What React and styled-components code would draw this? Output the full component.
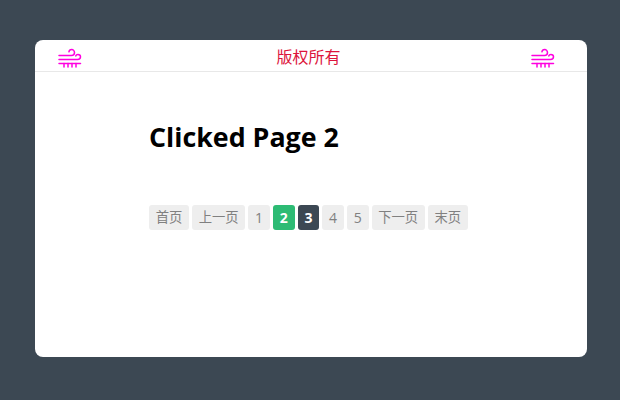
import { useState } from "react";
import styled, { createGlobalStyle } from "styled-components";

const GlobalStyle = createGlobalStyle`
  html, body {
    margin: 0;
    height: 100%;
    background: #3c4853;
    font-family: "Open Sans", "Noto Sans CJK SC", sans-serif;
  }
`;

const Page = styled.div`
  width: 620px;
  height: 400px;
  padding: 40px 33px 43px 35px;
  box-sizing: border-box;
`;

const Card = styled.main`
  height: 100%;
  background: #fff;
  border-radius: 8px;
  overflow: hidden;
`;

const Header = styled.header`
  height: 32px;
  box-sizing: border-box;
  padding: 4px 32px 0 23px;
  display: flex;
  align-items: center;
  justify-content: space-between;
  border-bottom: 1px solid #e8e8e8;
`;

const Title = styled.span`
  margin: -3px 0 0 4px;
  color: #dc143c;
  font-size: 16px;
  line-height: 27px;
  font-family: "Noto Sans CJK SC", sans-serif;
`;

const Content = styled.section`
  padding: 47px 0 0 114px;
`;

const Heading = styled.h1`
  margin: 0;
  color: #000;
  font-size: 26.8px;
  line-height: 36px;
  font-weight: 700;
`;

const Pager = styled.nav`
  margin-top: 50px;
  display: flex;
  gap: 3px;
`;

const PageButton = styled.button`
  height: 25px;
  min-width: ${(props) => (props.$wide ? "auto" : "21.67px")};
  padding: 0 6.67px;
  box-sizing: border-box;
  border: 0;
  border-radius: 3px;
  font-family: "Open Sans", "Noto Sans CJK SC", sans-serif;
  font-size: ${(props) => (props.$wide ? "13.33px" : "14px")};
  line-height: 25px;
  font-weight: ${(props) => (props.$tone ? 700 : 400)};
  color: ${(props) => (props.$tone ? "#fff" : "#808080")};
  background: ${(props) =>
    props.$tone === "current"
      ? "#2dbb74"
      : props.$tone === "hover"
        ? "#3c4853"
        : "#eeeeee"};
  cursor: pointer;
`;

const WindIcon = () => (
  <svg width="24" height="20" viewBox="0 0 24 20" fill="none" stroke="#ff00e0" strokeWidth="1.5" strokeLinecap="round">
    <path d="M1 7.5h12.5c2 0 3-1.4 3-3S15.2 1.5 13.7 1.5c-1.5 0-2.6 1-2.8 2.3" />
    <path d="M1 11.5h18.5c2 0 3-1.3 3-2.7s-1.2-2.4-2.6-2.4c-1 0-1.9.6-2.2 1.5" />
    <path d="M1 15.5h21.5" />
    <path d="M6 15.5v3.5M10 15.5v3.5M14 15.5v3.5M18 15.5v3.5" />
  </svg>
);

const labels = ["首页", "上一页", "1", "2", "3", "4", "5", "下一页", "末页"];

export default function App() {
  const [current, setCurrent] = useState("2");

  return (
    <Page>
      <GlobalStyle />
      <Card>
        <Header>
          <WindIcon />
          <Title>版权所有</Title>
          <WindIcon />
        </Header>
        <Content>
          <Heading>Clicked Page {current}</Heading>
          <Pager>
            {labels.map((label) => (
              <PageButton
                key={label}
                $wide={label.length > 1}
                $tone={label === current ? "current" : label === "3" ? "hover" : undefined}
                onClick={() => /\d/.test(label) && setCurrent(label)}
              >
                {label}
              </PageButton>
            ))}
          </Pager>
        </Content>
      </Card>
    </Page>
  );
}
